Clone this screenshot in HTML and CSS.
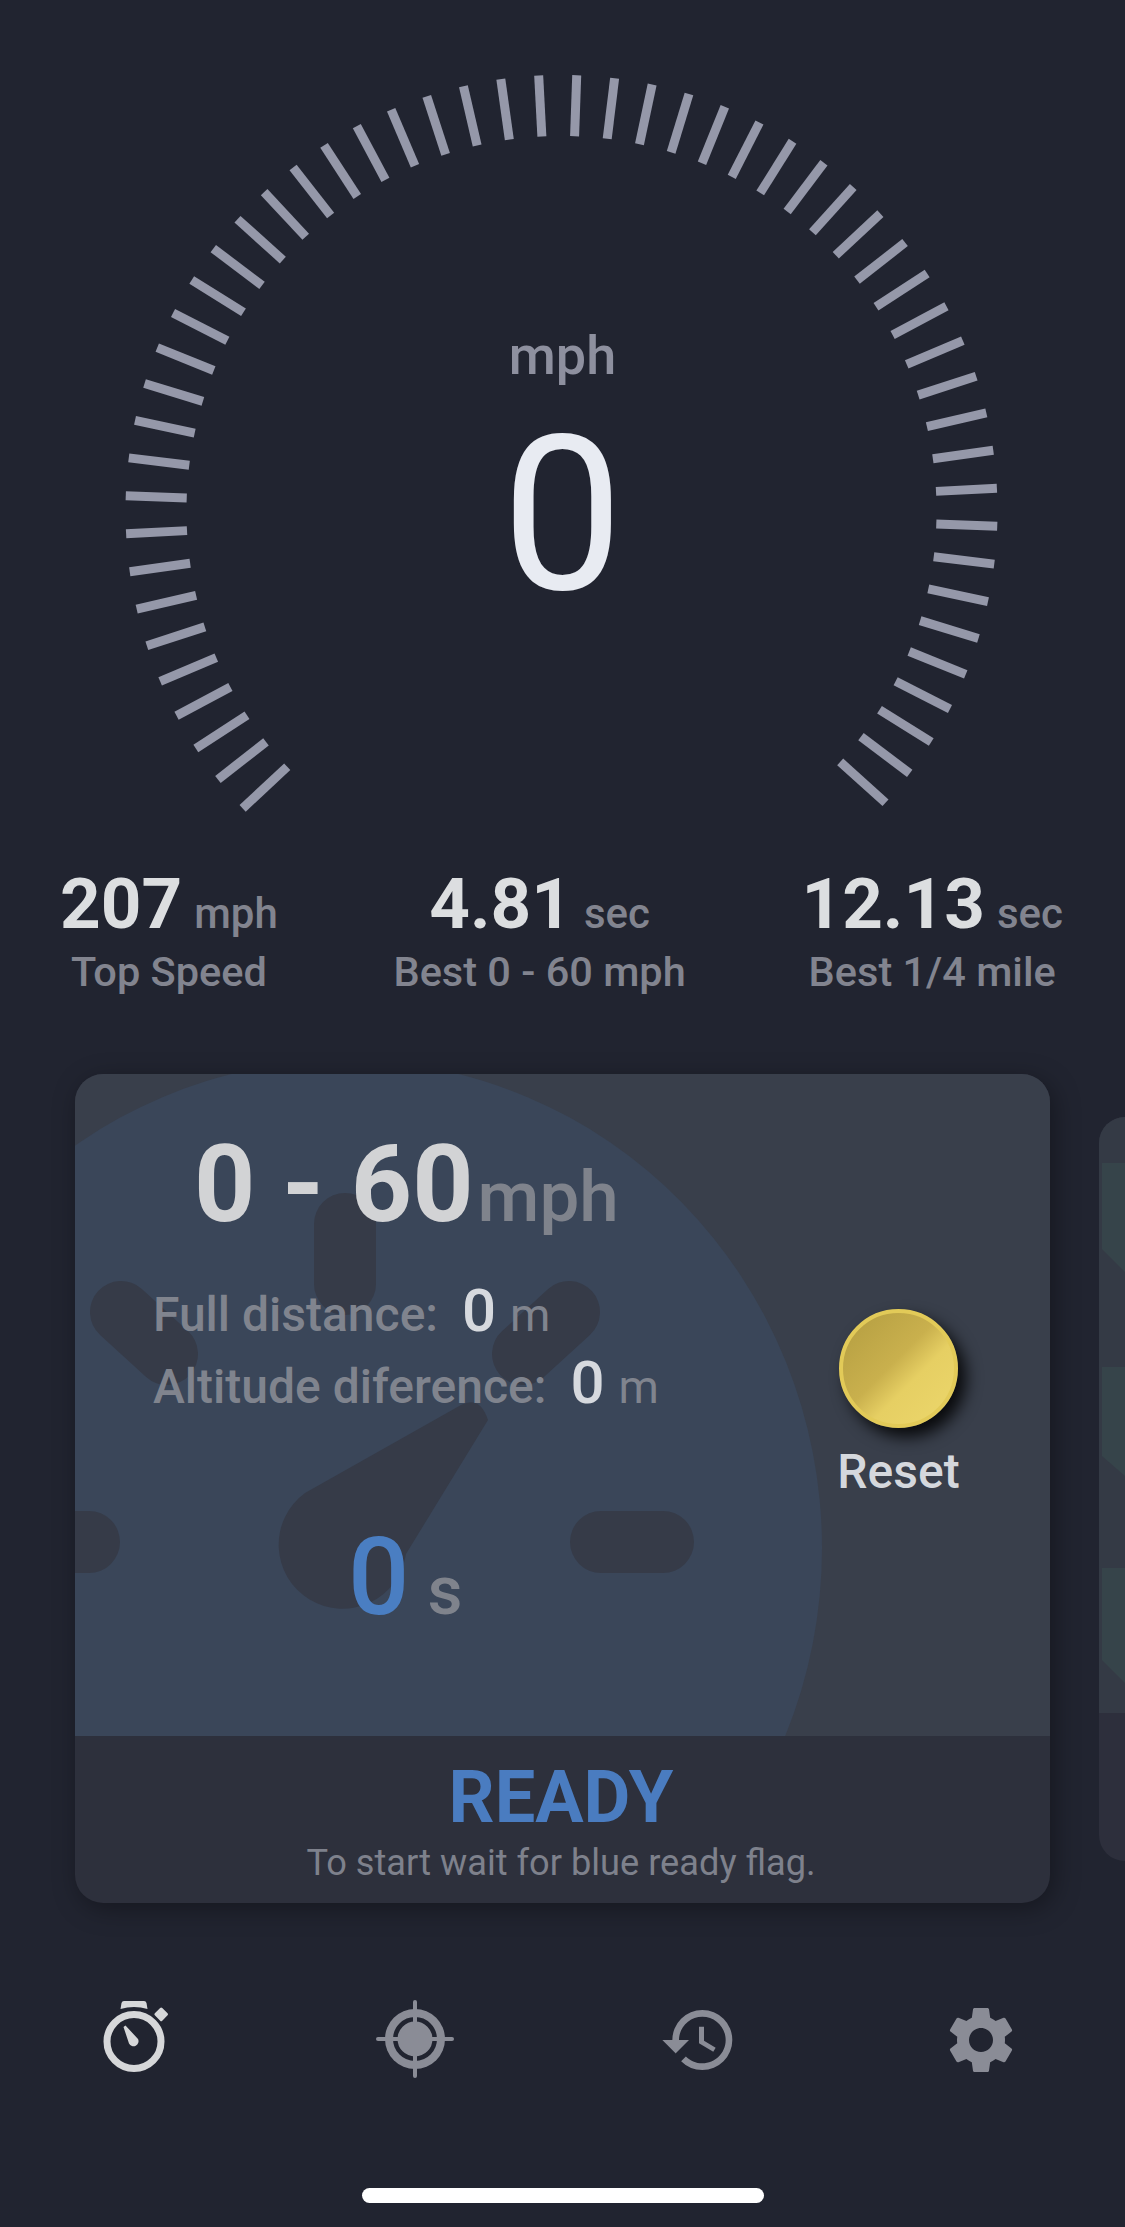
FILE: index.html
```html
<!DOCTYPE html>
<html lang="en">
<head>
    <meta charset="UTF-8">
    <meta name="viewport" content="width=device-width, initial-scale=1.0">
    <title>Speedometer</title>
    <link rel="stylesheet" href="styles.css">
</head>
<body>
    <div class="gauge">
        <svg class="gauge-ticks" id="gaugeTicks" width="1125" height="860" viewBox="0 0 1125 860"></svg>
        <div class="gauge-readout">
            <div class="gauge-unit">mph</div>
            <div class="gauge-value">0</div>
        </div>
    </div>

    <div class="stats">
        <div class="stat">
            <div class="stat-value">207<span class="stat-unit">mph</span></div>
            <div class="stat-label">Top Speed</div>
        </div>
        <div class="stat">
            <div class="stat-value">4.81<span class="stat-unit">sec</span></div>
            <div class="stat-label">Best 0 - 60 mph</div>
        </div>
        <div class="stat">
            <div class="stat-value">12.13<span class="stat-unit">sec</span></div>
            <div class="stat-label">Best 1/4 mile</div>
        </div>
    </div>

    <div class="carousel">
        <div class="card">
            <div class="card-top">
                <svg class="watermark" width="975" height="662" viewBox="0 0 975 662">
                    <ellipse class="watermark-disc" cx="270" cy="474" rx="477" ry="488"/>
                    <g class="watermark-marks">
                        <line x1="270" y1="150" x2="270" y2="210"/>
                        <line x1="46" y1="238" x2="92" y2="280"/>
                        <line x1="494" y1="238" x2="448" y2="280"/>
                        <line x1="-40" y1="468" x2="14" y2="468"/>
                        <line x1="526" y1="468" x2="588" y2="468"/>
                    </g>
                    <path class="watermark-needle" d="M386 331 Q405 321 413 346 L331 480 A64 64 0 1 1 230 419 Z"/>
                </svg>
                <div class="run-info">
                    <div class="run-title">0 - 60<span class="run-title-unit">mph</span></div>
                    <div class="run-row">Full distance:<span class="run-num">0</span><span class="run-unit">m</span></div>
                    <div class="run-row">Altitude diference:<span class="run-num">0</span><span class="run-unit">m</span></div>
                    <div class="run-time">0<span class="run-time-unit">s</span></div>
                </div>
                <div class="reset">
                    <div class="reset-button"></div>
                    <div class="reset-label">Reset</div>
                </div>
            </div>
            <div class="card-status">
                <div class="status-title">READY</div>
                <div class="status-text">To start wait for blue ready flag.</div>
            </div>
        </div>

        <div class="card-next">
            <svg class="next-top" width="26" height="596" viewBox="0 0 26 596">
                <polygon class="next-band" points="3,46 26,46 26,155 3,132"/>
                <polygon class="next-band" points="3,250 26,250 26,359 3,339"/>
                <polygon class="next-band" points="3,451 26,451 26,566 3,543"/>
            </svg>
        </div>
    </div>

    <div class="nav">
        <svg class="nav-icon nav-active" viewBox="0 0 80 80">
            <circle class="stopwatch-ring" cx="40" cy="41.5" r="27"/>
            <path d="M26.5 9 L27.5 3 Q28 1 30 1 L50 1 Q52 1 52.5 3 L53.5 9 Q40 5 26.5 9 Z"/>
            <rect x="62" y="9" width="10.5" height="10.5" rx="1.5" transform="rotate(45 67.2 14.2)"/>
            <path d="M29.5 27 L31.5 25.5 L44 39 A5 5 0 0 1 35 43.5 Z"/>
        </svg>
        <svg class="nav-icon" viewBox="0 0 80 80">
            <circle cx="39" cy="39" r="30"/>
            <circle class="target-gap" cx="39" cy="39" r="19.75"/>
            <rect x="37" y="0" width="4" height="78" rx="2"/>
            <rect x="0" y="37" width="78" height="4" rx="2"/>
        </svg>
        <svg class="nav-icon" viewBox="0 0 24 24">
            <path d="M13 3a9 9 0 0 0-9 9H1l3.89 3.89.07.14L9 12H6c0-3.87 3.13-7 7-7s7 3.13 7 7-3.13 7-7 7c-1.93 0-3.68-.79-4.94-2.06l-1.42 1.42A8.954 8.954 0 0 0 13 21a9 9 0 0 0 0-18zm-1 5v5l4.28 2.54.72-1.21-3.5-2.08V8H12z"/>
        </svg>
        <svg class="nav-icon" viewBox="0 0 24 24">
            <path d="M19.14 12.94c.04-.3.06-.61.06-.94 0-.32-.02-.64-.07-.94l2.03-1.58c.18-.14.23-.41.12-.61l-1.92-3.32c-.12-.22-.37-.29-.59-.22l-2.39.96c-.5-.38-1.03-.7-1.62-.94l-.36-2.54c-.04-.24-.24-.41-.48-.41h-3.84c-.24 0-.43.17-.47.41l-.36 2.54c-.59.24-1.13.57-1.62.94l-2.39-.96c-.22-.08-.47 0-.59.22L2.74 8.87c-.12.21-.08.47.12.61l2.03 1.58c-.05.3-.09.63-.09.94s.02.64.07.94l-2.03 1.58c-.18.14-.23.41-.12.61l1.92 3.32c.12.22.37.29.59.22l2.39-.96c.5.38 1.03.7 1.62.94l.36 2.54c.05.24.24.41.48.41h3.84c.24 0 .44-.17.47-.41l.36-2.54c.59-.24 1.13-.56 1.62-.94l2.39.96c.22.08.47 0 .59-.22l1.92-3.32c.12-.22.07-.47-.12-.61l-2.01-1.58zM12 15.6c-1.98 0-3.6-1.62-3.6-3.6s1.62-3.6 3.6-3.6 3.6 1.62 3.6 3.6-1.62 3.6-3.6 3.6z"/>
        </svg>
    </div>

    <div class="home-bar"></div>

    <script src="gauge.js"></script>
</body>
</html>
```

FILE: styles.css
```css
body {
    font-family: Roboto, "Liberation Sans", sans-serif;
    background-color: #212430;
    margin: 0;
    width: 1125px;
    height: 2227px;
    overflow: hidden;
}

/* gauge */
.gauge {
    display: grid;
    justify-items: center;
    height: 862px;
}
.gauge-ticks {
    grid-area: 1 / 1;
}
.gauge-ticks line {
    stroke: #9598a9;
    stroke-width: 9;
}
.gauge-readout {
    grid-area: 1 / 1;
    text-align: center;
    padding-top: 326px;
}
.gauge-unit {
    font-size: 54px;
    line-height: 60px;
    font-weight: 500;
    color: #8e909f;
}
.gauge-value {
    font-size: 216px;
    line-height: 250px;
    color: #e8ebf2;
    margin-top: 5px;
}

/* stats */
.stats {
    display: flex;
    justify-content: space-between;
    padding: 0 62px 0 60px;
}
.stat {
    text-align: center;
}
.stat-value {
    font-size: 71px;
    line-height: 84px;
    font-weight: 700;
    color: #dcdee0;
}
.stat-unit {
    font-size: 42px;
    line-height: 1;
    font-weight: 500;
    color: #82848f;
    margin-left: 12px;
}
.stat-label {
    font-size: 41.5px;
    line-height: 47px;
    font-weight: 500;
    color: #82848f;
    margin-top: 2px;
}

/* cards */
.carousel {
    display: flex;
    align-items: center;
    gap: 49px;
    margin-top: 79px;
    padding-left: 75px;
}
.card {
    flex: 0 0 975px;
    height: 829px;
    border-radius: 28px;
    overflow: hidden;
    background-color: #2d303c;
    box-shadow: 4px 6px 26px rgba(0, 0, 0, 0.35);
}
.card-top {
    position: relative;
    display: flex;
    justify-content: space-between;
    height: 662px;
    background-color: #393f4b;
    overflow: hidden;
}
.watermark {
    position: absolute;
    left: 0;
    top: 0;
}
.watermark-disc {
    fill: #3a4659;
}
.watermark-marks line {
    stroke: #363b48;
    stroke-width: 62;
    stroke-linecap: round;
}
.watermark-needle {
    fill: #363b48;
}
.run-info {
    position: relative;
    padding: 46px 0 0 78px;
}
.run-title {
    font-size: 107px;
    line-height: 130px;
    font-weight: 700;
    color: #d2d3d5;
    padding-left: 41px;
    white-space: nowrap;
}
.run-title-unit {
    font-size: 71px;
    line-height: 1;
    font-weight: 500;
    color: #7f838c;
    margin-left: 4px;
}
.run-row {
    font-size: 48px;
    line-height: 72px;
    font-weight: 500;
    color: #80848e;
    white-space: nowrap;
}
.run-title + .run-row {
    margin-top: 29px;
}
.run-num {
    font-size: 60px;
    line-height: 1;
    font-weight: 500;
    color: #d6d9de;
    margin-left: 24px;
}
.run-unit {
    font-size: 46px;
    line-height: 1;
    font-weight: 400;
    color: #80848e;
    margin-left: 14px;
}
.run-time {
    font-size: 108px;
    line-height: 130px;
    font-weight: 500;
    color: #4a7ec2;
    padding-left: 195px;
    margin-top: 89px;
}
.run-time-unit {
    font-size: 68px;
    line-height: 1;
    font-weight: 500;
    color: #7f838c;
    margin-left: 18px;
}
.reset {
    position: relative;
    display: flex;
    flex-direction: column;
    align-items: center;
    width: 119px;
    padding: 235px 92px 0 0;
}
.reset-button {
    flex: none;
    width: 119px;
    height: 119px;
    border-radius: 50%;
    box-sizing: border-box;
    border: 4px solid #e2ca58;
    background: linear-gradient(135deg, #b9a244 12%, #c9b04d 45%, #e6cf63 62%, #ecd76c);
    box-shadow: 8px 9px 16px rgba(0, 0, 0, 0.85);
}
.reset-label {
    font-size: 48px;
    line-height: 54px;
    font-weight: 500;
    color: #d5d8dd;
    margin-top: 17px;
}
.card-status {
    text-align: center;
    padding: 22px 3px 0 0;
}
.status-title {
    font-size: 72px;
    line-height: 80px;
    font-weight: 700;
    color: #4a7cc0;
}
.status-text {
    font-size: 36.2px;
    line-height: 42px;
    color: #7e818c;
    margin-top: 4px;
}
.card-next {
    flex: 0 0 26px;
    height: 744px;
    border-radius: 28px 0 0 28px;
    overflow: hidden;
    background-color: #2d2f3c;
}
.next-top {
    display: block;
    background-color: #343a45;
}
.next-band {
    fill: #36444a;
}

/* bottom nav */
.nav {
    display: flex;
    justify-content: space-between;
    margin-top: 97px;
    padding: 0 104px 0 94px;
}
.nav-icon {
    width: 80px;
    height: 80px;
    fill: #8a8c96;
}
.nav-active {
    fill: #d6d7d9;
}
.stopwatch-ring {
    fill: none;
    stroke: #d6d7d9;
    stroke-width: 7;
}
.target-gap {
    fill: none;
    stroke: #212430;
    stroke-width: 4.5;
}
.home-bar {
    width: 402px;
    height: 15px;
    border-radius: 8px;
    background-color: #fff;
    margin: 108px 0 0 362px;
}
```

FILE: gauge.js
```js
// 54 ticks, 5 degrees apart, clockwise from the lower left
const svg = document.getElementById('gaugeTicks');
const cx = 561.5;
const cy = 511;

for (let i = 0; i < 54; i++) {
    const angle = (-133 + i * 5) * Math.PI / 180;
    const line = document.createElementNS('http://www.w3.org/2000/svg', 'line');
    line.setAttribute('x1', cx + 375 * Math.sin(angle));
    line.setAttribute('y1', cy - 375 * Math.cos(angle));
    line.setAttribute('x2', cx + 436 * Math.sin(angle));
    line.setAttribute('y2', cy - 436 * Math.cos(angle));
    svg.appendChild(line);
}
```
